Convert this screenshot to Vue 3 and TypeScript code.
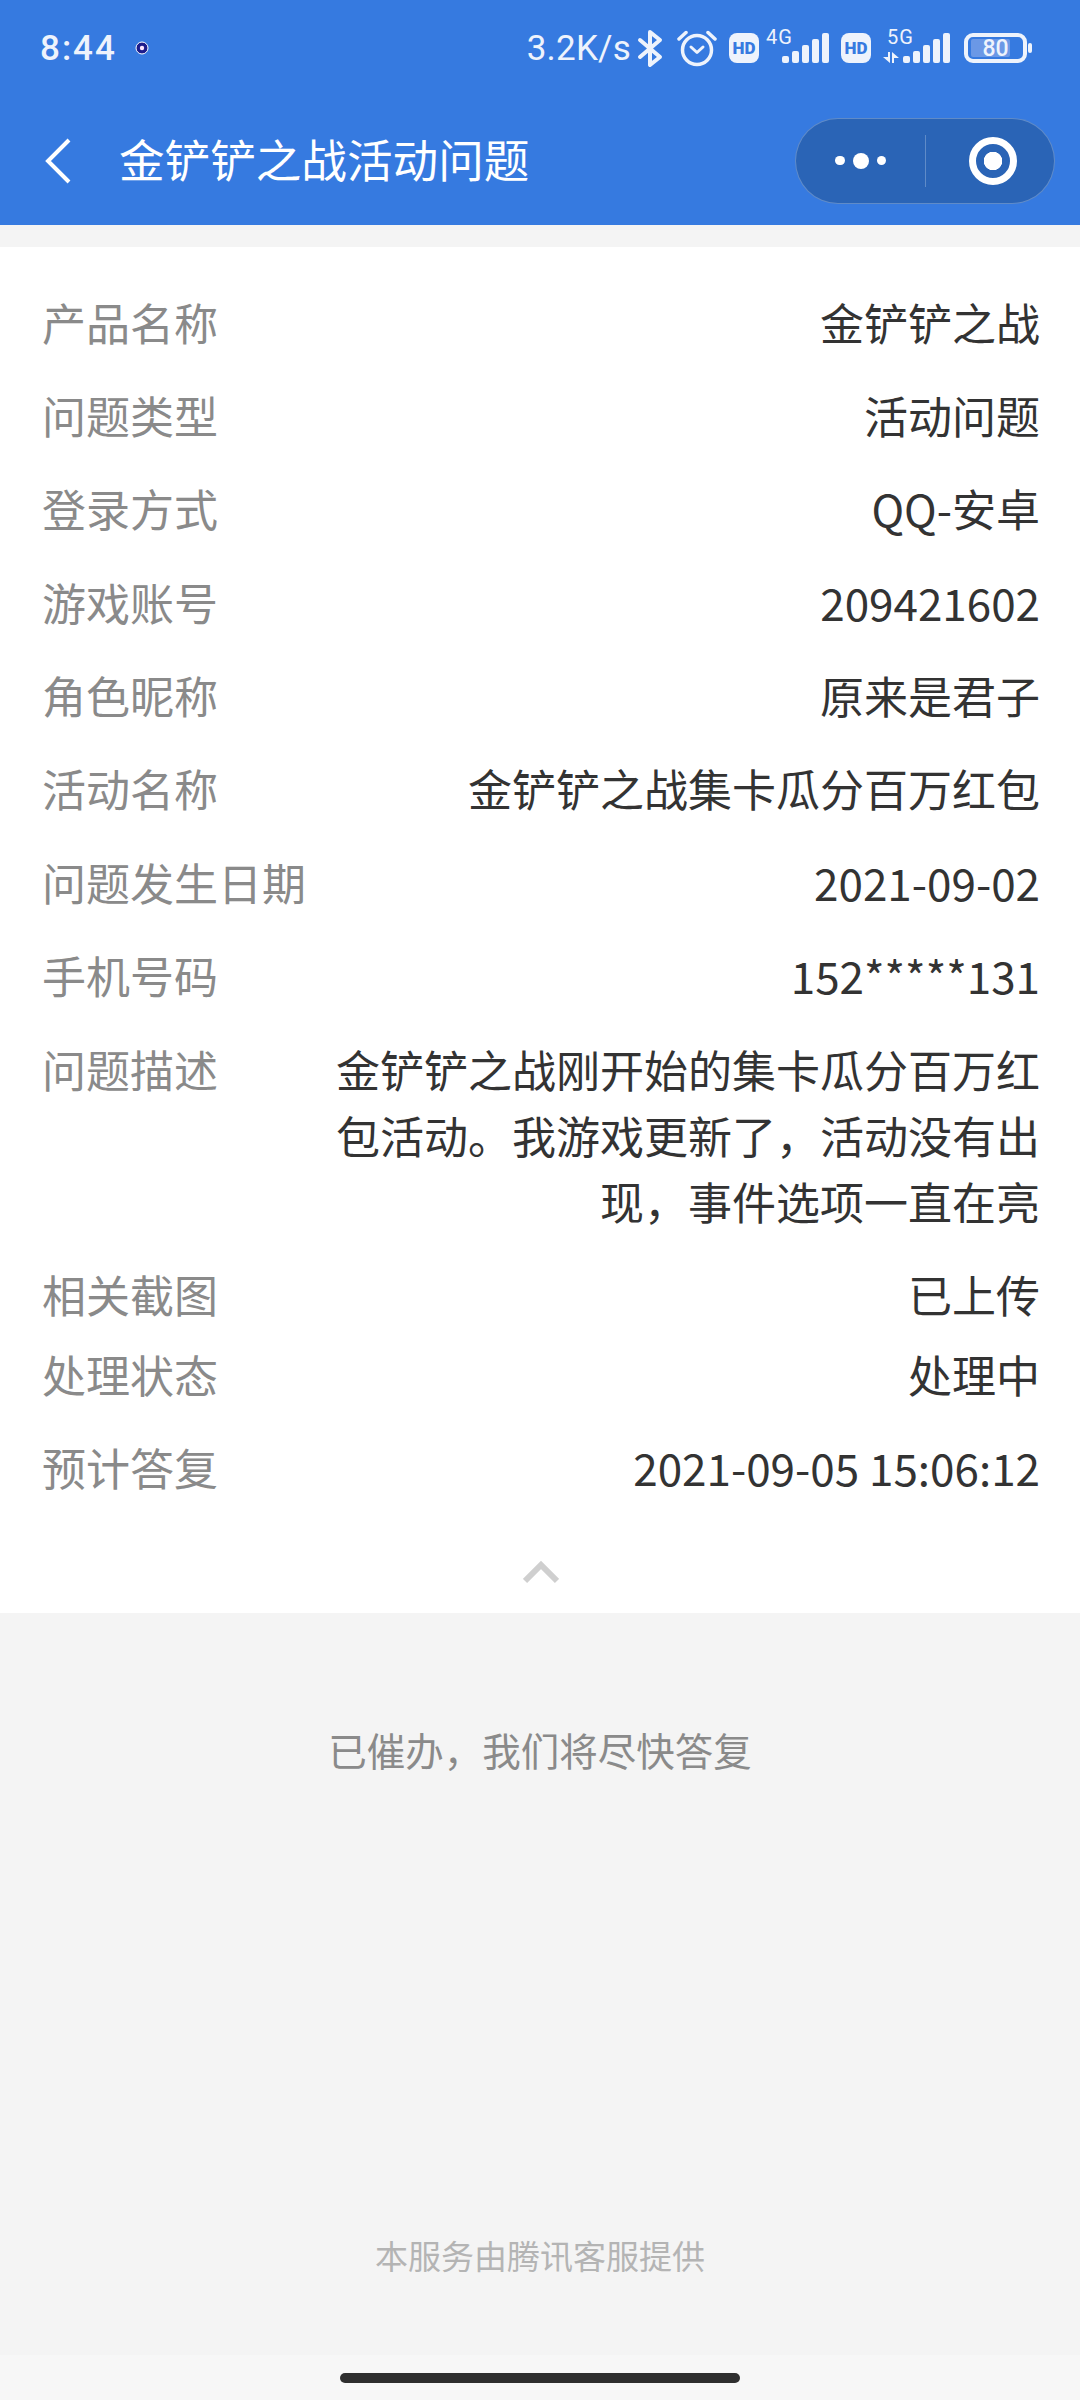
<script setup lang="ts">
const rows: { label: string; value: string; tight?: boolean }[] = [
  { label: '产品名称', value: '金铲铲之战' },
  { label: '问题类型', value: '活动问题' },
  { label: '登录方式', value: 'QQ-安卓' },
  { label: '游戏账号', value: '209421602' },
  { label: '角色昵称', value: '原来是君子' },
  { label: '活动名称', value: '金铲铲之战集卡瓜分百万红包' },
  { label: '问题发生日期', value: '2021-09-02' },
  { label: '手机号码', value: '152*****131' },
  { label: '问题描述', value: '金铲铲之战刚开始的集卡瓜分百万红包活动。我游戏更新了，活动没有出现，事件选项一直在亮' },
  { label: '相关截图', value: '已上传', tight: true },
  { label: '处理状态', value: '处理中' },
  { label: '预计答复', value: '2021-09-05 15:06:12' },
]

const barHeights = [7, 12, 18, 24, 30]
</script>

<template>
  <div class="page">
    <header class="header">
      <div class="status">
        <span class="status__time">8:44</span>
        <svg class="status__dot" width="14" height="14" viewBox="0 0 14 14">
          <circle cx="7" cy="7" r="6" fill="#1c1c8c" stroke="#fff" stroke-width="1" />
          <circle cx="7" cy="7" r="2.2" fill="#fbe6ff" />
        </svg>

        <div class="status__right">
          <span class="status__speed">3.2K/s</span>

          <svg class="status__bt" width="26" height="39" viewBox="0 0 26 39" fill="none" stroke="#eef3fc" stroke-width="4" stroke-linejoin="round" stroke-linecap="round">
            <path d="M3 11 L23 28 L13 36 V3 L23 11 L3 28" />
          </svg>

          <svg class="status__alarm" width="40" height="37" viewBox="0 0 40 37" fill="none" stroke="#eef3fc" stroke-linecap="round">
            <circle cx="20" cy="20" r="14.5" stroke-width="3.5" />
            <path d="M14 17 L20 22.5 L26 17" stroke-width="3" stroke-linejoin="round" />
            <path d="M2 9 L9 2.5 M38 9 L31 2.5" stroke-width="3.5" />
          </svg>

          <span class="status__hd">HD</span>

          <div class="status__net">
            <span class="status__gen">4G</span>
            <div class="status__bars">
              <i v-for="h in barHeights" :key="h" :style="{ height: h + 'px' }"></i>
            </div>
          </div>

          <span class="status__hd">HD</span>

          <div class="status__net status__net--five">
            <span class="status__gen">5G</span>
            <svg class="status__arrows" width="16" height="11" viewBox="0 0 16 11" fill="#eef3fc">
              <path d="M0 5 H7 V11 Z M5 0 H7 V6 H5 Z" />
              <path d="M9 0 L16 6 H9 Z M9 5 H11 V11 H9 Z" />
            </svg>
            <div class="status__bars">
              <i v-for="h in barHeights" :key="h" :style="{ height: h + 'px' }"></i>
            </div>
          </div>

          <div class="status__battery">
            <div class="status__level"></div>
            <span class="status__percent">80</span>
          </div>
          <div class="status__tip"></div>
        </div>
      </div>

      <nav class="nav">
        <svg class="nav__back" width="26" height="46" viewBox="0 0 26 46" fill="none" stroke="#fff" stroke-width="4">
          <path d="M24 2 L3 23 L24 44" />
        </svg>
        <h1 class="nav__title">金铲铲之战活动问题</h1>

        <div class="capsule">
          <div class="capsule__more">
            <i class="capsule__dot"></i>
            <i class="capsule__dot capsule__dot--big"></i>
            <i class="capsule__dot"></i>
          </div>
          <div class="capsule__line"></div>
          <div class="capsule__close">
            <i class="capsule__ring"></i>
          </div>
        </div>
      </nav>
    </header>

    <section class="card">
      <div v-for="row in rows" :key="row.label" :class="['row', { 'row--tight': row.tight }]">
        <span class="row__label">{{ row.label }}</span>
        <span class="row__value">{{ row.value }}</span>
      </div>
      <div class="card__fold">
        <svg width="36" height="24" viewBox="0 0 36 24" fill="none" stroke="#cfcfcf" stroke-width="6">
          <path d="M2 21 L18 5 L34 21" />
        </svg>
      </div>
    </section>

    <main class="main">
      <p class="main__msg">已催办，我们将尽快答复</p>
      <p class="main__foot">本服务由腾讯客服提供</p>
    </main>

    <div class="home">
      <div class="home__bar"></div>
    </div>
  </div>
</template>

<style>
html,
body {
  margin: 0;
  background: #f4f4f4;
}
</style>

<style scoped>
.page {
  display: flex;
  flex-direction: column;
  height: 2400px;
  overflow: hidden;
  background: #f4f4f4;
  font-family: "Noto Sans CJK SC", "Noto Sans", sans-serif;
}

.header {
  flex: none;
  height: 225px;
  background: #367ae0;
}

.status {
  display: flex;
  align-items: center;
  height: 96px;
  padding: 0 48px 0 40px;
  color: #eef3fc;
  font-family: Roboto, sans-serif;
}

.status__time {
  font-size: 35px;
  font-weight: 500;
  letter-spacing: 2px;
}

.status__dot {
  margin-left: 18px;
}

.status__right {
  display: flex;
  align-items: center;
  margin-left: auto;
}

.status__speed {
  font-size: 35px;
  letter-spacing: 0.2px;
}

.status__bt {
  margin-left: 6px;
}

.status__alarm {
  margin-left: 14px;
}

.status__hd {
  display: flex;
  align-items: center;
  justify-content: center;
  width: 30px;
  height: 30px;
  margin-left: 12px;
  border-radius: 8px;
  background: #eef3fc;
  color: #367ae0;
  font-size: 17px;
  font-weight: 900;
}

.status__net {
  position: relative;
  width: 63px;
  height: 40px;
  margin-left: 7px;
}

.status__net--five {
  width: 67px;
  margin-left: 12px;
}

.status__gen {
  position: absolute;
  left: 0;
  top: -1px;
  font-size: 20px;
  line-height: 20px;
  letter-spacing: 1px;
}

.status__net--five .status__gen {
  left: 4px;
}

.status__arrows {
  position: absolute;
  left: 0;
  bottom: 5px;
}

.status__bars {
  position: absolute;
  right: 0;
  bottom: 5px;
  display: flex;
  align-items: flex-end;
  gap: 3px;
}

.status__bars i {
  width: 7px;
  border-radius: 2px;
  background: #eef3fc;
}

.status__battery {
  position: relative;
  display: flex;
  align-items: center;
  justify-content: center;
  box-sizing: border-box;
  width: 63px;
  height: 30px;
  margin-left: 14px;
  border: 4px solid #eef3fc;
  border-radius: 9px;
}

.status__level {
  position: absolute;
  left: 3px;
  top: 2px;
  bottom: 2px;
  width: 39px;
  border-radius: 2px;
  background: #6b98e6;
}

.status__percent {
  position: relative;
  font-size: 23px;
  font-weight: 500;
  line-height: 1;
  color: #eef3fc;
}

.status__tip {
  width: 4px;
  height: 10px;
  margin-left: 1px;
  border-radius: 2px;
  background: #eef3fc;
}

.nav {
  display: flex;
  align-items: center;
  height: 129px;
  padding: 0 25px 0 45px;
  color: #fff;
}

.nav__title {
  margin: 0 0 4px 48px;
  font-size: 45.6px;
  font-weight: 400;
  line-height: 1;
}

.capsule {
  display: flex;
  align-items: center;
  box-sizing: border-box;
  width: 260px;
  height: 86px;
  margin-left: auto;
  border: 1px solid rgba(255, 255, 255, 0.25);
  border-radius: 43px;
  background: #2a64b6;
}

.capsule__more {
  display: flex;
  align-items: center;
  justify-content: center;
  gap: 8px;
  width: 129px;
}

.capsule__dot {
  width: 9.5px;
  height: 9.5px;
  border-radius: 50%;
  background: #fff;
}

.capsule__dot--big {
  width: 16px;
  height: 16px;
}

.capsule__line {
  width: 1px;
  height: 52px;
  background: rgba(255, 255, 255, 0.25);
}

.capsule__close {
  display: flex;
  align-items: center;
  justify-content: center;
  flex: 1;
  padding-left: 6px;
}

.capsule__ring {
  display: flex;
  box-sizing: border-box;
  width: 48px;
  height: 48px;
  border: 7px solid #fff;
  border-radius: 50%;
  background: radial-gradient(circle, #fff 0 9px, transparent 9.5px);
}

.card {
  flex: none;
  box-sizing: border-box;
  height: 1366px;
  margin-top: 22px;
  padding: 41.5px 40px 0 42px;
  background: #fff;
  font-size: 44px;
  line-height: 66px;
}

.row {
  display: flex;
  justify-content: space-between;
  margin-bottom: 27.4px;
}

.row--tight {
  margin-bottom: 14px;
}

.row__label {
  flex: none;
  color: #8a8a8a;
}

.row__value {
  max-width: 704px;
  color: #333;
  text-align: right;
}

.card__fold {
  display: flex;
  justify-content: center;
  margin-top: 59.5px;
}

.main {
  flex: 1;
  display: flex;
  flex-direction: column;
  align-items: center;
}

.main__msg {
  margin: 106px 0 0;
  font-size: 38.5px;
  line-height: 60px;
  color: #8a8a8a;
}

.main__foot {
  margin: auto 0 75px;
  font-size: 33px;
  line-height: 50px;
  color: #b4b4b4;
}

.home {
  flex: none;
  display: flex;
  justify-content: center;
  height: 45px;
  padding-top: 18px;
  box-sizing: border-box;
  background: #f7f7f7;
}

.home__bar {
  width: 400px;
  height: 10px;
  border-radius: 5px;
  background: #2e2e2e;
}
</style>
